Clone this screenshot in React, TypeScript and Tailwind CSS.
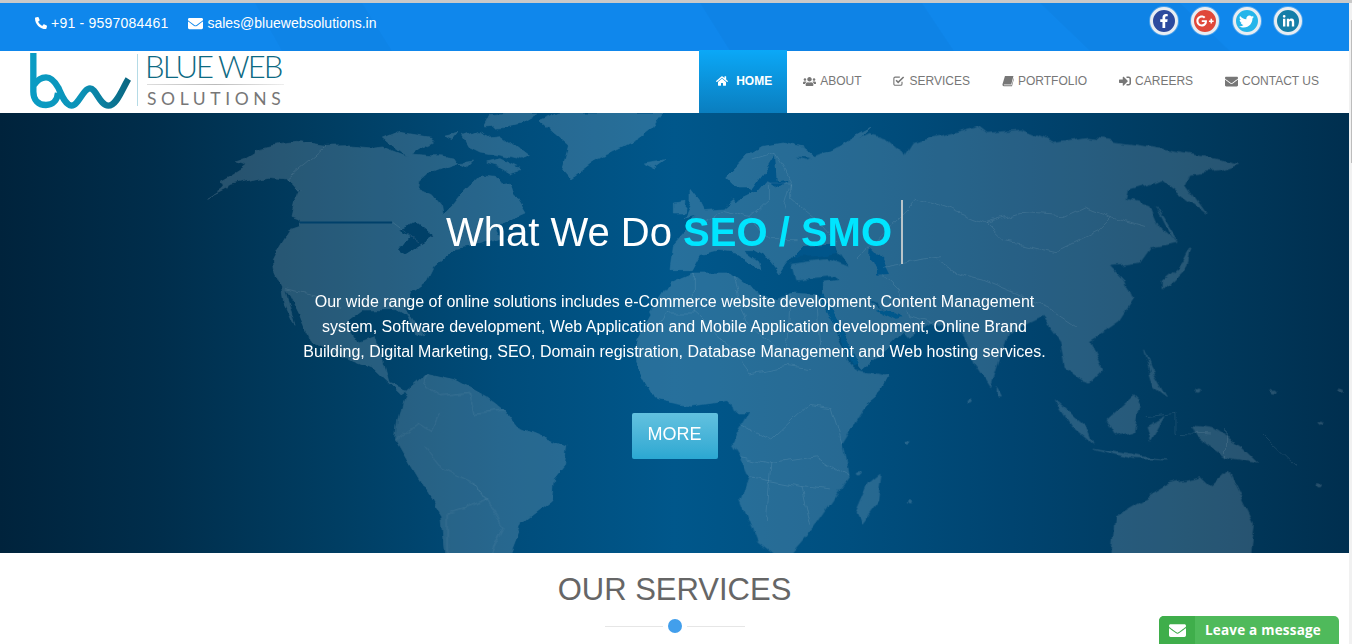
import {
  FaEnvelope,
  FaFacebookF,
  FaGooglePlusG,
  FaHome,
  FaLinkedinIn,
  FaPhoneAlt,
  FaSignInAlt,
  FaTwitter,
  FaUsers,
} from 'react-icons/fa';

function CheckSquareIcon({ className }: { className?: string }) {
  return (
    <svg viewBox="0 0 14 13" className={className} fill="none" stroke="currentColor">
      <path d="M10.5 7.5V10a1.5 1.5 0 0 1-1.5 1.5H2.5A1.5 1.5 0 0 1 1 10V3.5A1.5 1.5 0 0 1 2.5 2H8" strokeWidth="1.3" />
      <path d="M3.6 5.6 6 8 12.4 1.8" strokeWidth="1.9" />
    </svg>
  );
}

function BookIcon({ className }: { className?: string }) {
  return (
    <svg viewBox="0 0 13 13" className={className} fill="currentColor">
      <path d="M3.2 1H12.4L10 10.2H2.6C2 10.2 1.8 10.8 2.2 11.1H10.4L12.6 3.4 13 4 10.8 12.2H2C.8 12.2.2 11 .6 9.8Z" />
    </svg>
  );
}

const navItems = [
  { label: 'About', icon: FaUsers, iconClass: 'w-[13px] h-[13px]' },
  { label: 'Services', icon: CheckSquareIcon, iconClass: 'w-3 h-3' },
  { label: 'Portfolio', icon: BookIcon, iconClass: 'w-3 h-3' },
  { label: 'Careers', icon: FaSignInAlt, iconClass: 'w-3 h-3' },
  { label: 'Contact Us', icon: FaEnvelope, iconClass: 'w-[13px] h-[13px]' },
];

const socials = [
  { icon: FaFacebookF, bg: 'bg-[#2c4a9e]', size: 'w-[14px] h-[14px]' },
  { icon: FaGooglePlusG, bg: 'bg-[#e0483a]', size: 'w-[18px] h-[18px]' },
  { icon: FaTwitter, bg: 'bg-[#25b5ea]', size: 'w-[15px] h-[15px]' },
  { icon: FaLinkedinIn, bg: 'bg-[#147ea8]', size: 'w-[13px] h-[13px]' },
];

function Logo() {
  return (
    <div className="flex items-start h-[62px] shrink-0">
      <svg width="112" height="62" viewBox="0 0 336 186" className="shrink-0">
        <defs>
          <linearGradient id="bw" gradientUnits="userSpaceOnUse" x1="30" x2="330" y1="0" y2="0">
            <stop offset="0" stopColor="#0a9cc4" />
            <stop offset="0.5" stopColor="#0b93b8" />
            <stop offset="1" stopColor="#0a6580" />
          </linearGradient>
        </defs>
        <g fill="none" stroke="url(#bw)" strokeWidth="19">
          <path d="M40 6 V122 C40 147 55 162 78 162 C98 162 112 147 114 125" />
          <path d="M42 102 C52 87 62 79 78 79 C95 79 105 92 115 110 C125 132 135 162 155 164 C175 164 190 112 210 112 C228 112 240 164 265 164 C290 164 305 117 325 84" />
        </g>
      </svg>
      <div className="w-px h-[52px] mt-[3px] mr-[7px] ml-[5px] bg-[#b5dbe6]" />
      <div className="flex flex-col w-[139px]">
        <span className="font-['Lato'] font-light text-[31px] leading-[31px] tracking-[-1.9px] text-[#0d6a83] whitespace-nowrap">
          BLUE WEB
        </span>
        <div className="h-px mt-[2px] ml-[2px] bg-gradient-to-r from-[#ddd] via-[#bbb] to-[#eee]" />
        <span className="font-['Lato'] text-[17.5px] leading-[18px] mt-[5px] ml-[2px] tracking-[4.6px] text-[#777] whitespace-nowrap">
          SOLUTIONS
        </span>
      </div>
    </div>
  );
}

function WorldMap() {
  const land = 'translate(200,0) scale(0.33333)';
  const europe = 'translate(590,0) scale(0.33333)';
  const west = 'translate(0,-3) scale(0.431,0.33333)';
  const east = 'translate(676,-3) scale(0.431,0.33333)';
  return (
    <svg width="1349" height="440" viewBox="0 0 1349 440" className="absolute inset-0">
      <defs>
        {/* roughens the hand-traced coastlines and borders */}
        <filter id="rough" filterUnits="userSpaceOnUse" x="0" y="0" width="1349" height="440">
          <feTurbulence type="fractalNoise" baseFrequency="0.055" numOctaves="3" seed="4" result="n" />
          <feDisplacementMap in="SourceGraphic" in2="n" scale="9" xChannelSelector="R" yChannelSelector="G" />
        </filter>
      </defs>
      <g filter="url(#rough)">
        <g opacity="0.155" fill="#fff" stroke="#fff" strokeWidth="2" strokeLinejoin="round">
          {/* americas */}
          <g transform={land}>
            <path d="M20 250 60 225 70 213 60 208 100 185 140 160 108 150 140 140 165 125 168 110 230 95 290 88 375 100 440 98 520 105 548 102 620 130 632 120 700 125 722 125 762 132 775 150 730 165 690 180 660 205 655 225 700 245 725 275 730 305 760 275 800 225 840 185 880 190 900 215 935 210 945 250 975 300 930 320 890 340 905 372 830 395 760 410 700 460 680 500 640 530 625 575 610 582 640 625 672 672 650 660 625 610 590 590 486 591 435 630 474 690 525 672 537 711 564 810 621 831 600 845 513 762 408 720 330 681 300 610 270 550 255 530 285 640 250 560 245 525 225 480 220 440 240 400 270 350 300 340 300 320 270 310 280 270 295 250 300 235 280 210 260 195 200 190 150 200 90 215Z" />
            <path d="M550 75 600 55 690 70 700 85 660 105 620 130 580 100Z" />
            <path d="M735 70 775 60 760 80Z" />
            <path d="M790 70 830 55 860 70 900 65 985 130 960 145 900 130 840 120 810 105Z" />
            <path d="M780 155 815 150 800 165Z" />
            <path d="M860 150 900 140 960 170 930 180 895 160Z" />
            <path d="M870 5 920 0 1010 0 960 30 920 40 850 45Z" />
            <path d="M1020 25 1080 0 1200 0 1200 130 1110 198 1085 170 1105 100Z" />
          </g>
          <g transform={west}>
            <path d="M945 840 990 790 1060 810 1130 860 1170 900 1200 950 1315 1010 1310 1060 1285 1100 1280 1170 1210 1240 1180 1340 1035 1340 1025 1220 960 1080 920 990 925 930Z" />
          </g>
          {/* europe, north africa, arabia */}
          <g transform={europe}>
            <path d="M-20 0 220 0 190 40 140 80 40 130 -20 160Z" />
            <path d="M160 150 225 140 190 165Z" />
            <path d="M300 232 330 270 345 300 280 315 300 270Z" />
            <path d="M250 270 285 265 280 300 250 300Z" />
            <path d="M430 260 400 285 340 290 300 320 290 350 250 395 240 470 310 470 335 425 380 415 430 420 470 445 510 470 500 440 460 410 490 410 540 440 570 480 590 450 610 430 640 395 730 380 760 420 830 400 800 280 700 140 640 160 620 130 680 135 640 105 580 90 520 100 470 130 410 195 440 225 470 225 490 240 440 265Z" />
            <path d="M760 90 840 45 800 85 770 110Z" />
            <path d="M240 510 310 480 420 480 470 520 540 560 610 540 680 545 720 620 780 760 850 800 892 785 860 850 800 900 440 900 430 860 370 870 300 880 200 860 140 750 140 680 190 590Z" />
            <path d="M700 510 790 500 850 570 940 620 960 640 900 700 820 770 780 720 700 590Z" />
          </g>
          {/* africa south, asia, islands, australia */}
          <g transform={east}>
            <path d="M100 780 130 905 170 905 145 960 130 1000 150 1040 170 1100 150 1170 190 1300 230 1340 260 1340 320 1250 400 1100 385 1000 470 820 490 800 420 780 400 760 300 760Z" />
            <path d="M478 1090 470 1170 430 1240 420 1210 450 1120Z" />
            <path d="M250 130 300 150 340 130 400 100 450 70 490 85 520 120 530 140 550 100 640 70 700 50 720 70 800 60 880 100 960 85 1090 110 1240 140 1305 160 1260 180 1190 190 1180 220 1230 310 1190 270 1130 210 1050 240 1045 270 1100 290 1120 350 1165 400 1100 415 1075 460 1010 470 1040 510 1060 570 1030 630 985 670 960 690 990 780 960 820 900 770 890 690 850 620 770 670 730 830 700 770 670 670 590 640 540 680 500 620 470 580 380 530 370 500 280 510 270 460 350 445 400 470 370 410 280 410 240 440 200 300Z" />
            <path d="M1195 410 1185 470 1130 540 1130 510 1175 460Z" />
            <path d="M1115 290 1165 395 1150 380Z" />
            <path d="M1085 720 1100 770 1140 860 1110 830Z" />
            <path d="M1000 930 1060 860 1075 880 1060 960 1020 975Z" />
            <path d="M880 870 950 950 965 1000 920 950Z" />
            <path d="M965 1015 1080 1040 1140 1050 1060 1045Z" />
            <path d="M1200 950 1250 960 1310 1010 1350 1060 1275 1040 1210 980Z" />
            <path d="M1090 950 1130 920 1100 990Z" />
            <path d="M1010 1340 1020 1220 1150 1120 1215 1100 1240 1130 1280 1080 1340 1240 1330 1340Z" />
            <path d="M745 830 755 855 745 855Z" />
            <ellipse cx="1213" cy="842" rx="5" ry="5" />
            <ellipse cx="1385" cy="845" rx="5" ry="5" />
            <ellipse cx="1538" cy="845" rx="5" ry="5" />
            <ellipse cx="1498" cy="938" rx="5" ry="5" />
            <ellipse cx="1490" cy="1132" rx="5" ry="5" />
            <ellipse cx="680" cy="875" rx="5" ry="5" />
            <ellipse cx="535" cy="998" rx="5" ry="5" />
            <ellipse cx="425" cy="1090" rx="5" ry="5" />
            <ellipse cx="542" cy="1180" rx="5" ry="5" />
          </g>
        </g>

        {/* inland water */}
        <g>
          <path transform={land} d="M595 350 650 330 700 370 660 395 620 420 600 410 630 370Z" fill="#004068" />
          <g transform={europe}>
            <path d="M480 240 530 170 555 130 560 205 600 200 560 225 530 205 500 240Z" fill="#00558a" />
            <path d="M610 432 640 396 730 392 745 420 680 430Z" fill="#00558a" />
            <path d="M842 400 880 440 900 480 860 482 840 440Z" fill="#00558a" />
            <path d="M690 545 705 545 810 755 790 760Z" fill="#00588c" />
            <path d="M860 590 885 585 935 615 920 620Z" fill="#00588c" />
          </g>
        </g>

        {/* borders */}
        <g fill="none" stroke="#fff" strokeOpacity="0.09" strokeWidth="1">
          <path transform={land} vectorEffect="non-scaling-stroke" d="M375 100 262 195 300 235M578 328 660 390M255 530 330 545 430 590" />
          <path transform={west} vectorEffect="non-scaling-stroke" d="M990 790 985 830 1020 860 1090 850 1100 910 1170 900M920 990 970 940 1000 965 1020 910M985 1010 1020 1070 1100 1120 1130 1170 1090 1190 1040 1210 1040 1329M1100 1120 1170 1250 1140 1329" />
          <path transform={europe} vectorEffect="non-scaling-stroke" d="M535 210H605V260L640 290 690 330 740 390M535 210V260L480 310 400 290 340 330M480 310 540 380 620 380M310 480 310 600 230 600 200 650M430 490 470 630 580 720M600 540 595 680 580 720M310 600 420 700 480 780 590 760 660 770M680 545 690 720" />
          <path transform={east} vectorEffect="non-scaling-stroke" d="M420 450 560 265 620 290 720 340 800 310 900 320 950 290 1010 320 1090 350M720 340 760 390 880 425 975 365 1010 320M600 450 650 490 710 510 860 590 930 650M480 470 560 450 610 440M480 490 520 540 540 620 590 640M150 940 220 990 310 880 360 890 385 1000M150 1040 220 1060 330 1040 400 1100M170 1100 290 1130 360 1140M220 1060 210 1230M290 1130 310 1250M180 150 230 130 270 210 250 300M1090 920 1160 910 1160 970 1240 975M1275 960V1040M1360 970 1440 1070" />
        </g>
      </g>
      <path d="M300 109.5H392" stroke="#00406a" strokeWidth="2" />
    </svg>
  );
}

export default function App() {
  return (
    <div className="relative h-[644px] overflow-hidden bg-white font-['Liberation_Sans',Arial,sans-serif]">
      <div className="h-[3px] bg-[#c9c9c9]" />
      <div className="flex">
        <main className="w-[1349px] shrink-0">
          {/* top bar */}
          <div className="relative h-[48px] bg-[#0f87ec] overflow-hidden flex items-start justify-between text-white">
            <svg width="1349" height="48" className="absolute inset-0">
              <path d="M255 0H362L392 48H282Z" fill="#000" fillOpacity="0.02" />
              <path d="M700 0H922L954 48H730Z" fill="#000" fillOpacity="0.025" />
              <path d="M1040 0H1180L1230 48H1090Z" fill="#000" fillOpacity="0.025" />
            </svg>
            <div className="relative flex items-center h-[40px] pl-[35px] text-[14px]">
              <FaPhoneAlt className="w-3 h-3 mr-[4px]" />
              <span className="tracking-[0.015em]">+91 - 9597084461</span>
              <FaEnvelope className="w-[15px] h-[15px] ml-[20px] mr-[4px]" />
              <span>sales@bluewebsolutions.in</span>
            </div>
            <div className="relative flex gap-[13.5px] mt-[4px] mr-[47px]">
              {socials.map(({ icon: Icon, bg, size }, i) => (
                <div
                  key={i}
                  className={`w-[28px] h-[28px] rounded-full border-[3px] border-[#e8edf2] flex items-center justify-center shadow-[0_0_0_1px_rgba(255,255,255,0.25)] ${bg}`}
                >
                  <Icon className={`${size} text-white`} />
                </div>
              ))}
            </div>
          </div>

          {/* nav */}
          <header className="flex justify-between h-[62px] bg-white">
            <div className="pl-[20px]">
              <Logo />
            </div>
            <nav className="flex items-stretch pr-[14px] text-[12px] uppercase text-[#777]">
              <a className="relative -mt-px flex items-center pl-[17px] pr-[15px] pb-[1px] gap-[8px] font-bold text-white bg-gradient-to-b from-[#0ba8f7] to-[#0a7ebf]">
                <FaHome className="w-3 h-3" />
                Home
              </a>
              {navItems.map(({ label, icon: Icon, iconClass }) => (
                <a key={label} className="flex items-center px-4 pb-[2px] gap-[4px] whitespace-nowrap">
                  <Icon className={iconClass} />
                  {label}
                </a>
              ))}
            </nav>
          </header>

          {/* hero */}
          <section className="relative h-[440px] overflow-hidden bg-[linear-gradient(to_right,#00233c_0%,#002e4c_12%,#003e63_25%,#004c7a_37%,#00578b_50%,#004f7f_63%,#004470_75%,#003a5e_88%,#002f4f_100%)]">
            <WorldMap />
            <div className="relative flex flex-col items-center pt-[87px] text-white">
              <div className="flex items-center h-[64px]">
                <h1 className="text-[40px] leading-[46px] whitespace-nowrap">
                  What We Do <span className="font-bold text-[#00e5ff]">SEO / SMO</span>
                </h1>
                <div className="w-[2px] h-[64px] ml-[9px] bg-[#b9c4c9]" />
              </div>
              <p className="w-[750px] mt-[25px] text-center text-[16px] leading-[25px]">
                Our wide range of online solutions includes e-Commerce website development, Content Management system,
                Software development, Web Application and Mobile Application development, Online Brand Building, Digital
                Marketing, SEO, Domain registration, Database Management and Web hosting services.
              </p>
              <a className="flex items-center justify-center w-[86px] h-[46px] mt-[49px] pb-[4px] rounded-[2px] text-[18px] bg-gradient-to-b from-[#62c1df] to-[#2aa8d2]">
                MORE
              </a>
            </div>
          </section>

          {/* services heading */}
          <section className="flex flex-col items-center pt-[18px]">
            <h2 className="text-[31px] leading-[38px] text-[#666]">OUR SERVICES</h2>
            <div className="flex items-center mt-[10px] gap-[5px]">
              <div className="w-[58px] h-px bg-[#e6e6e6]" />
              <div className="w-[14px] h-[14px] rounded-full bg-[#429fec]" />
              <div className="w-[58px] h-px bg-[#e6e6e6]" />
            </div>
          </section>
        </main>

        {/* scrollbar */}
        <div className="w-[3px] h-[641px] bg-[#f1f1f1] flex justify-end">
          <div className="w-px h-[143px] mt-[17px] bg-[#bdbdbd]" />
        </div>
      </div>

      {/* chat widget */}
      <div className="absolute left-[1159px] top-[616px] flex w-[180px] h-[28px] rounded-t-[5px] overflow-hidden bg-[#4fba5b] text-white">
        <div className="flex items-center justify-center w-[36px] bg-[#3fae4b]">
          <FaEnvelope className="w-[17px] h-[17px]" />
        </div>
        <span className="pl-[10px] font-['Open_Sans'] font-bold text-[13.5px] tracking-[0.2px] leading-[28px] whitespace-nowrap">
          Leave a message
        </span>
      </div>
    </div>
  );
}
